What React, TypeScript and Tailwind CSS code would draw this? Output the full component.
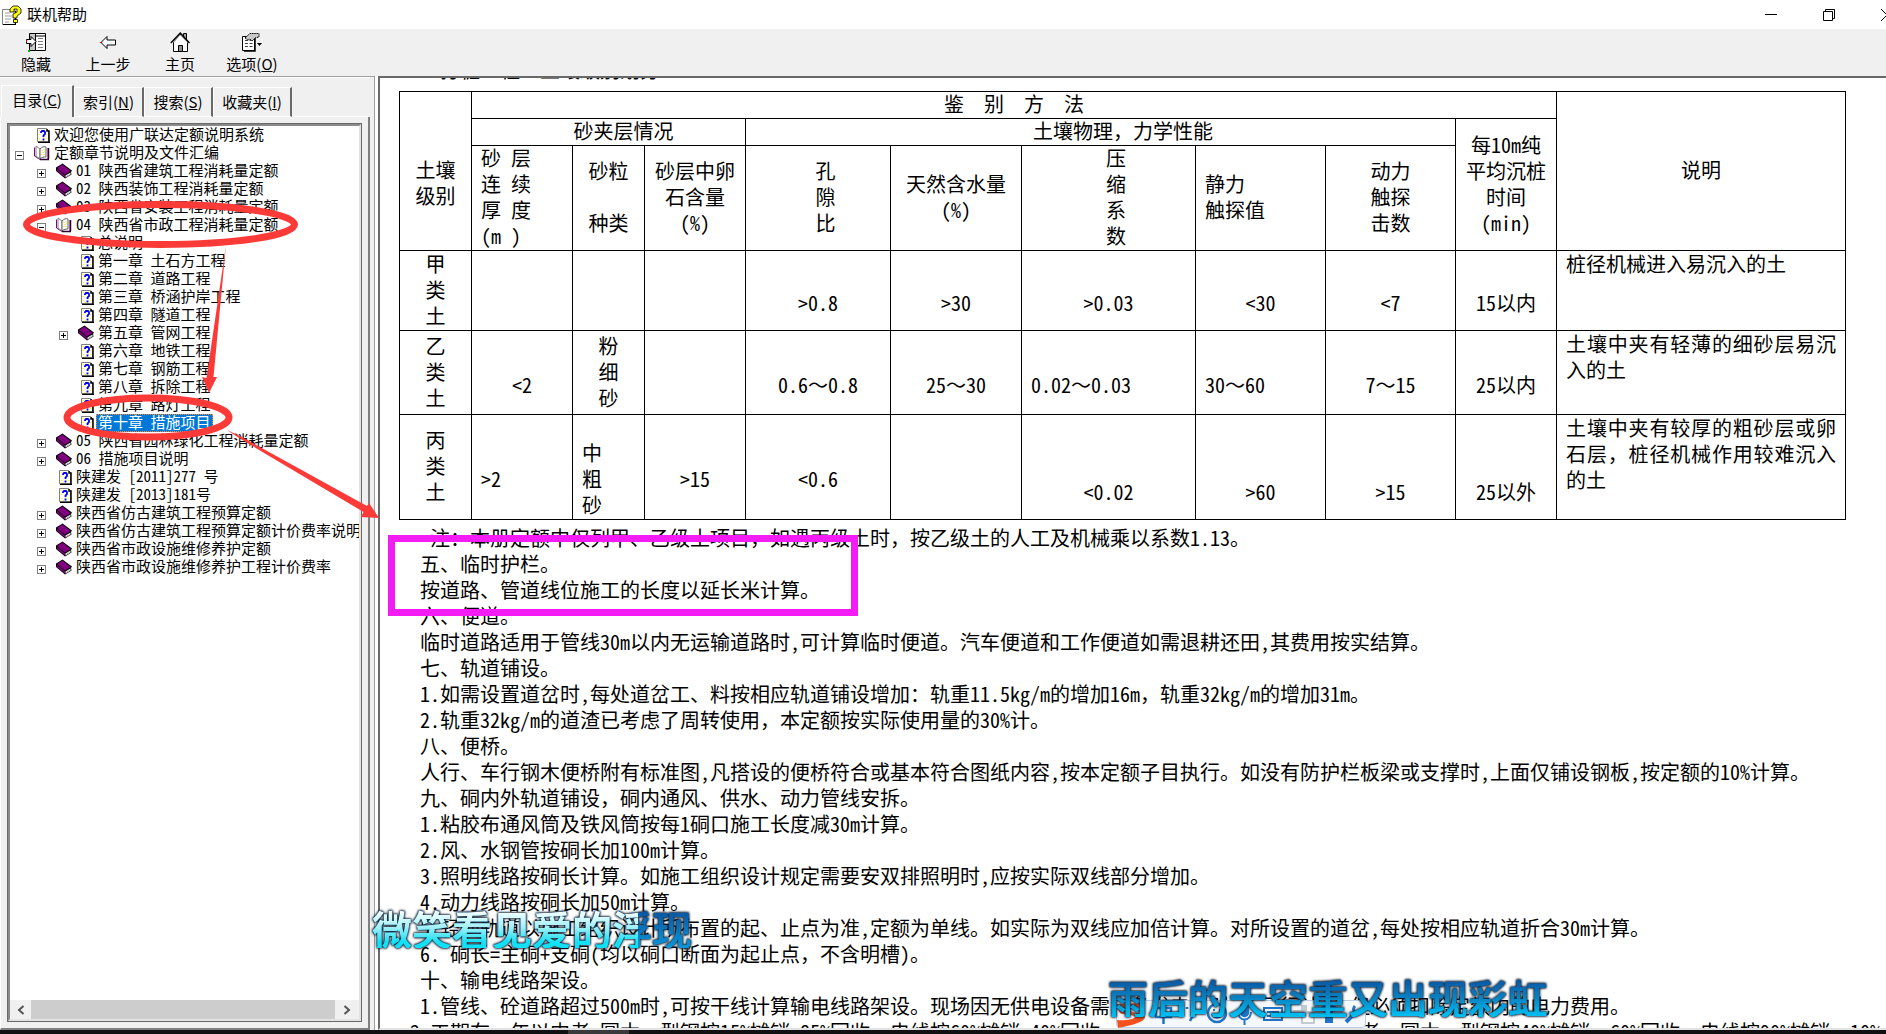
import { useState, type ReactNode } from 'react';
import clsx from 'clsx';

type NodeKind = 'page' | 'book' | 'open';

type TreeItem = {
  level: 0 | 1 | 2;
  kind: NodeKind;
  label: string;
  toggle?: '+' | '-';
};

const TREE: TreeItem[] = [
  { level: 0, kind: 'page', label: '欢迎您使用广联达定额说明系统' },
  { level: 0, kind: 'open', toggle: '-', label: '定额章节说明及文件汇编' },
  { level: 1, kind: 'book', toggle: '+', label: '01 陕西省建筑工程消耗量定额' },
  { level: 1, kind: 'book', toggle: '+', label: '02 陕西装饰工程消耗量定额' },
  { level: 1, kind: 'book', toggle: '+', label: '03 陕西省安装工程消耗量定额' },
  { level: 1, kind: 'open', toggle: '-', label: '04 陕西省市政工程消耗量定额' },
  { level: 2, kind: 'page', label: '总说明' },
  { level: 2, kind: 'page', label: '第一章 土石方工程' },
  { level: 2, kind: 'page', label: '第二章 道路工程' },
  { level: 2, kind: 'page', label: '第三章 桥涵护岸工程' },
  { level: 2, kind: 'page', label: '第四章 隧道工程' },
  { level: 2, kind: 'book', toggle: '+', label: '第五章 管网工程' },
  { level: 2, kind: 'page', label: '第六章 地铁工程' },
  { level: 2, kind: 'page', label: '第七章 钢筋工程' },
  { level: 2, kind: 'page', label: '第八章 拆除工程' },
  { level: 2, kind: 'page', label: '第九章 路灯工程' },
  { level: 2, kind: 'page', label: '第十章 措施项目' },
  { level: 1, kind: 'book', toggle: '+', label: '05 陕西省园林绿化工程消耗量定额' },
  { level: 1, kind: 'book', toggle: '+', label: '06 措施项目说明' },
  { level: 1, kind: 'page', label: '陕建发 [2011]277 号' },
  { level: 1, kind: 'page', label: '陕建发 [2013]181号' },
  { level: 1, kind: 'book', toggle: '+', label: '陕西省仿古建筑工程预算定额' },
  { level: 1, kind: 'book', toggle: '+', label: '陕西省仿古建筑工程预算定额计价费率说明' },
  { level: 1, kind: 'book', toggle: '+', label: '陕西省市政设施维修养护定额' },
  { level: 1, kind: 'book', toggle: '+', label: '陕西省市政设施维修养护工程计价费率' },
];

const INDENT = ['pl-1', 'pl-[26px]', 'pl-12'];

const PARAGRAPHS = [
  '五、临时护栏。',
  '按道路、管道线位施工的长度以延长米计算。',
  '六、便道。',
  '临时道路适用于管线30m以内无运输道路时,可计算临时便道。汽车便道和工作便道如需退耕还田,其费用按实结算。',
  '七、轨道铺设。',
  '1.如需设置道岔时,每处道岔工、料按相应轨道铺设增加：轨重11.5kg/m的增加16m，轨重32kg/m的增加31m。',
  '2.轨重32kg/m的道渣已考虑了周转使用，本定额按实际使用量的30%计。',
  '八、便桥。',
  '人行、车行钢木便桥附有标准图,凡搭设的便桥符合或基本符合图纸内容,按本定额子目执行。如没有防护栏板梁或支撑时,上面仅铺设钢板,按定额的10%计算。',
  '九、硐内外轨道铺设，硐内通风、供水、动力管线安拆。',
  '1.粘胶布通风筒及铁风筒按每1硐口施工长度减30m计算。',
  '2.风、水钢管按硐长加100m计算。',
  '3.照明线路按硐长计算。如施工组织设计规定需要安双排照明时,应按实际双线部分增加。',
  '4.动力线路按硐长加50m计算。',
  '5.轻便轨道以施工组织设计所布置的起、止点为准,定额为单线。如实际为双线应加倍计算。对所设置的道岔,每处按相应轨道折合30m计算。',
  '6. 硐长=主硐+支硐(均以硐口断面为起止点，不含明槽)。',
  '十、输电线路架设。',
  '1.管线、砼道路超过500m时,可按干线计算输电线路架设。现场因无供电设备需自备发电机时,可另行计算,但必须扣除定额内的电力费用。',
];

const COLUMN_WIDTHS = [
  'w-[72px]', 'w-[101px]', 'w-[72px]', 'w-[101px]', 'w-[145px]', 'w-[131px]',
  'w-[174px]', 'w-[130px]', 'w-[130px]', 'w-[101px]', 'w-[289px]',
];

function HelpLogo() {
  return (
    <svg width="20" height="20" viewBox="0 0 20 20">
      <path d="M.5 4.500H13v15H.5z" fill="#fff" stroke="#808080" />
      <path d="M3 8h5M3 11h7M3 14h6M3 17h4" stroke="#9a9a9a" />
      <path d="M13.500 6v13.500M1 19.500h13" stroke="#000" />
      <path d="M8 7V4l3-3h5l3 3v4l-4 3v2h-4V9l4-2V4h-3v3z" fill="#ff0" stroke="#000" strokeWidth=".8" />
      <path d="M11.500 14.500h4v3h-4z" fill="#ff0" stroke="#000" strokeWidth=".8" />
    </svg>
  );
}

function PageIcon() {
  return (
    <svg width="13" height="15" viewBox="0 0 13 15" className="ml-[3px]">
      <path d="M.5.5h9l2 2v11H.5z" fill="#fffff0" stroke="#808080" />
      <path d="M2 2h1v1H2zM8 2h1v1H8zM2 6h1v1H2zM9 6h1v1H9zM2 10h1v1H2zM9 10h1v1H9zM4 12h1v1H4z" fill="#ff0" />
      <path d="M10 1v2h2v11.500M1 14.500h12" fill="none" stroke="#000" strokeWidth="1.500" />
      <path d="M4 5V4l1-1h2l1 1v2L6.500 7.500V9M6.500 10.500v2" fill="none" stroke="#00f" strokeWidth="1.800" />
    </svg>
  );
}

function BookIcon() {
  return (
    <svg width="16" height="16" viewBox="0 0 16 16">
      <path d="M0 4.500L6.500.5 16 7.500l-1 1.500.5 2.500L9 15.500 0 8z" fill="#000" />
      <path d="M1 5l5.500-3.500L14.500 8 9 11.500z" fill="#800080" />
      <path d="M1 6l8 6.500v2L1 8z" fill="#800080" />
      <path d="M9.500 12.500l5-3v2l-5 3z" fill="#fff" />
      <path d="M10 13.500l4-2.500" stroke="#808080" strokeWidth=".6" />
    </svg>
  );
}

function OpenBookIcon() {
  return (
    <svg width="16" height="16" viewBox="0 0 16 16">
      <path d="M.5 2.500v8.500l5.500 3.500h8V3" fill="#fff" stroke="#800080" />
      <path d="M2 1l4 3v10l-4-3z" fill="#fff" stroke="#808080" />
      <path d="M6 4c2-2 4-3 6-2v10c-2 0-4 0-6 2z" fill="#fff" stroke="#606060" />
      <path d="M8 5v1M10 4v1M9 7v1M11 6v1M8 9v1M10 9v1" stroke="#e0d000" />
      <path d="M14.500 3v11M6 14.500h9" stroke="#300030" strokeWidth="1.500" />
    </svg>
  );
}

const NODE_ICONS: Record<NodeKind, () => ReactNode> = {
  page: PageIcon,
  book: BookIcon,
  open: OpenBookIcon,
};

function HideIcon() {
  return (
    <svg width="20" height="19" viewBox="0 0 20 19">
      <path d="M3.500.5h16v17h-16z" fill="#fff" stroke="#000" />
      <path d="M4 3h15" stroke="#000" />
      <path d="M4 1h5v16H4z" fill="#c8c8c8" />
      <path d="M9.500 1v17" stroke="#000" />
      <path d="M12 5.500h5M12 8.500h5M12 11.500h5M12 14.500h5" stroke="#808080" />
      <path d="M.5 6.500H5v-3l5 5-5 5v-3H.5z" fill="#fff" stroke="#000" />
      <path d="M0 7h1v2H0z" fill="red" />
      <path d="M2 17h2v2H2z" fill="#00c000" />
    </svg>
  );
}

function BackIcon() {
  return (
    <svg width="16" height="19" viewBox="0 0 16 19">
      <path d="M1 9.500l6-6v3.500h8.500v5H7v3.500z" fill="#fff" stroke="#000" />
      <path d="M0 9h2v1H0z" fill="red" />
    </svg>
  );
}

function HomeIcon() {
  return (
    <svg width="20" height="20" viewBox="0 0 20 20">
      <path d="M13.500 6V1.500h3V8" fill="#a0a0a0" stroke="#000" />
      <path d="M3.500 10v9.500h14V10l-7-8z" fill="#fff" stroke="#000" />
      <path d="M.8 11l9.500-10 9.200 10" fill="none" stroke="#000" strokeWidth="1.400" />
      <path d="M3 10.500l7.300-7.500 7.200 7.500" fill="none" stroke="#b0b0b0" />
      <path d="M8.500 13.500h4v6h-4z" fill="#909090" stroke="#000" />
    </svg>
  );
}

function OptionsIcon() {
  return (
    <svg width="20" height="19" viewBox="0 0 20 19">
      <path d="M.5 3.500h12v14H.5z" fill="#fff" stroke="#000" />
      <path d="M3 7.500h3M3 10.500h3M3 13.500h3M7.500 7.500h3M7.500 10.500h3M7.500 13.500h3" stroke="#404040" />
      <path d="M13 5v13H2" fill="none" stroke="#000" strokeWidth="1.500" />
      <path d="M3 5l5-4.500h9V4l-4 1-3 3-2-2-2 1z" fill="#c8c8c8" stroke="#000" strokeDasharray="1.500 .7" />
      <path d="M15 10h5l-2.500 3z" fill="#000" />
    </svg>
  );
}

function ToolButton({ icon, children }: { icon: ReactNode; children: ReactNode }) {
  return (
    <button className="flex w-18 flex-col items-center gap-0.5 pt-[3px] text-[15px] leading-5">
      <span className="flex h-5 items-center">{icon}</span>
      <span className="whitespace-nowrap">{children}</span>
    </button>
  );
}

const TABS = [
  { label: '目录', hotkey: 'C', width: 'w-[73px]' },
  { label: '索引', hotkey: 'N', width: 'w-[70px]' },
  { label: '搜索', hotkey: 'S', width: 'w-[69px]' },
  { label: '收藏夹', hotkey: 'I', width: 'w-[79px]' },
];

function TreeRow({ item, selected, onSelect }: { item: TreeItem; selected: boolean; onSelect: () => void }) {
  const Icon = NODE_ICONS[item.kind];
  return (
    <li className={clsx('flex h-[18px] items-center whitespace-nowrap', INDENT[item.level])}>
      {item.toggle ? (
        <button
          aria-label={item.label}
          className="mt-1 flex size-[9px] shrink-0 items-center justify-center border border-[#808080] bg-white"
        >
          <svg width="5" height="5" viewBox="0 0 5 5">
            <path d={item.toggle === '+' ? 'M0 2.500h5M2.500 0v5' : 'M0 2.500h5'} stroke="#000" />
          </svg>
        </button>
      ) : (
        <span className="w-[9px] shrink-0" />
      )}
      <span className="ml-2.5 w-4 shrink-0">
        <Icon />
      </span>
      <a
        href="#doc"
        onClick={onSelect}
        className={clsx(
          'ml-0.5 px-0.5 pb-0.5 leading-4',
          selected && 'bg-[#0078d7] text-white outline-1 -outline-offset-1 outline-dotted outline-[#ff8728]',
        )}
      >
        {item.label}
      </a>
    </li>
  );
}

type CellProps = {
  lines: string[];
  align?: 'left' | 'center' | 'note';
  indent?: string;
  colSpan?: number;
  rowSpan?: number;
  head?: boolean;
};

// An empty string in `lines` is a blank line of the source document.
function Cell({ lines, align = 'center', indent, colSpan, rowSpan, head }: CellProps) {
  const Tag = head ? 'th' : 'td';
  return (
    <Tag
      colSpan={colSpan}
      rowSpan={rowSpan}
      className={clsx(
        'border border-black px-[9px] py-0 font-light',
        align === 'left' && 'text-left align-middle',
        align === 'center' && 'text-center align-middle',
        align === 'note' && 'text-justify align-top',
        indent,
      )}
    >
      {lines.map((line, i) => (
        <div key={i} className={align === 'note' ? 'leading-[26px]' : 'h-[26px] leading-6'}>{line}</div>
      ))}
    </Tag>
  );
}

function SoilTable() {
  return (
    <table className="ml-[19px] w-[1447px] table-fixed border-collapse">
      <colgroup>
        {COLUMN_WIDTHS.map((w, i) => (
          <col key={i} className={w} />
        ))}
      </colgroup>
      <thead>
        <tr className="h-[27px]">
          <Cell head rowSpan={3} lines={['', '土壤', '级别']} />
          <Cell head colSpan={9} lines={['鉴　别　方　法']} />
          <Cell head rowSpan={3} lines={['说明']} />
        </tr>
        <tr className="h-[27px]">
          <Cell head colSpan={3} indent="indent-[30px]" lines={['砂夹层情况']} />
          <Cell head colSpan={5} indent="indent-[45px]" lines={['土壤物理，力学性能']} />
          <Cell head rowSpan={2} lines={['每10m纯', '平均沉桩', '时间', '(min)']} />
        </tr>
        <tr className="h-[105px]">
          <Cell head align="left" lines={['砂 层', '连 续', '厚 度', '(m )']} />
          <Cell head lines={['砂粒', '', '种类']} />
          <Cell head lines={['砂层中卵', '石含量', '(%)']} />
          <Cell head indent="indent-[15px]" lines={['孔', '隙', '比']} />
          <Cell head lines={['天然含水量', '(%)']} />
          <Cell head indent="indent-[15px]" lines={['压', '缩', '系', '数']} />
          <Cell head align="left" lines={['静力', '触探值']} />
          <Cell head lines={['动力', '触探', '击数']} />
        </tr>
      </thead>
      <tbody>
        <tr className="h-20">
          <Cell lines={['甲', '类', '土']} />
          <Cell lines={[]} />
          <Cell lines={[]} />
          <Cell lines={[]} />
          <Cell lines={['', '>0.8']} />
          <Cell lines={['', '>30']} />
          <Cell lines={['', '>0.03']} />
          <Cell lines={['', '<30']} />
          <Cell lines={['', '<7']} />
          <Cell lines={['', '15以内']} />
          <Cell align="note" lines={['桩径机械进入易沉入的土']} />
        </tr>
        <tr className="h-[84px]">
          <Cell lines={['乙', '类', '土']} />
          <Cell lines={['', '<2']} />
          <Cell lines={['粉', '细', '砂']} />
          <Cell lines={[]} />
          <Cell lines={['', '0.6～0.8']} />
          <Cell lines={['', '25～30']} />
          <Cell align="left" lines={['', '0.02～0.03']} />
          <Cell align="left" lines={['', '30～60']} />
          <Cell lines={['', '7～15']} />
          <Cell lines={['', '25以内']} />
          <Cell align="note" lines={['土壤中夹有轻薄的细砂层易沉入的土']} />
        </tr>
        <tr className="h-[105px]">
          <Cell lines={['丙', '类', '土']} />
          <Cell align="left" lines={['', '>2']} />
          <Cell align="left" lines={['', '中', '粗', '砂']} />
          <Cell lines={['', '>15']} />
          <Cell lines={['', '<0.6']} />
          <Cell lines={[]} />
          <Cell lines={['', '', '<0.02']} />
          <Cell lines={['', '', '>60']} />
          <Cell lines={['', '', '>15']} />
          <Cell lines={['', '', '25以外']} />
          <Cell align="note" lines={['土壤中夹有较厚的粗砂层或卵石层，桩径机械作用较难沉入的土']} />
        </tr>
      </tbody>
    </table>
  );
}

function Annotations() {
  return (
    <>
      <svg width="400" height="540" viewBox="0 0 400 540" className="pointer-events-none absolute top-0 left-0">
        <g fill="none" stroke="#fc3b39" strokeWidth="7">
          <ellipse cx="160.500" cy="224.500" rx="134" ry="20" />
          <ellipse cx="148" cy="417.500" rx="81" ry="19.500" />
        </g>
        <g fill="#fc3b39">
          <path d="M226 245L213.500 377l3.500 0L209 393l-7-16 4.500 1z" />
          <path d="M227 430L240 436 367 506l2-3 10 15-18-1 2.500-5L239 438z" />
        </g>
      </svg>
      <div className="pointer-events-none absolute top-[535px] left-[388px] h-[81px] w-[470px] border-7 border-[#f41cf4]" />
    </>
  );
}

function ImeBar() {
  return (
    <div className="absolute top-[1000px] left-[1116px] flex h-7 w-[250px] items-center rounded-sm border border-[#b9cfe6] bg-[#f5f9fe]">
      <svg width="248" height="28" viewBox="0 0 248 28" fill="none" stroke="#1f74c8" strokeWidth="2.500">
        <path d="M0 4l28-1c-1 5-14 4-14 7 0 4 14 2 14 7 0 6-18 9-27 11l-1-8c8 1 18-1 18-3 0-3-16-1-16-6z" fill="#f4511e" stroke="none" />
        <path d="M39 8h15v9H39zM46.500 3v21M70 7v2M76 15l-3 6" />
        <circle cx="100" cy="13" r="9" />
        <path d="M95 14c2 5 8 5 10 0M97 9v2M103 9v2" strokeWidth="2" />
        <rect x="124" y="3" width="7" height="13" rx="3.500" fill="#1f74c8" />
        <path d="M121 12c0 10 13 10 13 0M127.500 20v5" strokeWidth="2" />
        <path d="M147 8h18v12h-18zM150 12h12M150 16h12" strokeWidth="2" />
        <path d="M176 10h8V5h6v6h6v6h-20z" fill="#c3c9d3" stroke="none" />
        <path d="M185 13h12v10h-12z" fill="#fff" stroke="#b4bcc8" strokeWidth="1.500" />
        <path d="M204 7l5-3h6l5 3-2 5-2-1v12h-8V11l-2 1z" fill="#1f74c8" stroke="none" />
        <path d="M229 22l10-10" strokeWidth="4" />
        <path d="M238 6c-4 4 1 10 6 6" strokeWidth="3" />
      </svg>
    </div>
  );
}

function Lyrics() {
  return (
    <div className="pointer-events-none text-[40px] leading-10 font-bold whitespace-nowrap">
      <p className="absolute top-[908px] left-[372px] bg-[linear-gradient(#f4ffff_10%,#9deff6_50%,#12e0f4_85%),linear-gradient(#0a4f9c,#0a96d8)] bg-[length:266px_100%,100%_100%] bg-clip-text bg-no-repeat text-transparent [filter:drop-shadow(0_0_1px_#123)_drop-shadow(0_0_1px_#123)]">
        微笑看见爱的浮现
      </p>
      <p className="absolute top-[977px] left-[1108px] bg-[linear-gradient(#0a58a4_10%,#0a80c0_50%,#00bcf0_95%)] bg-clip-text text-transparent [filter:drop-shadow(0_0_1px_#123)_drop-shadow(0_0_1px_#123)]">
        雨后的天空重又出现彩虹
      </p>
    </div>
  );
}

export default function App() {
  const [selected, setSelected] = useState(16);
  const [tab, setTab] = useState(0);

  return (
    <div className="relative flex h-screen flex-col overflow-hidden bg-[#f0f0f0] font-['Noto_Sans_CJK_SC',sans-serif] text-black">
      <header className="flex h-[29px] shrink-0 items-center bg-white pl-0.5">
        <HelpLogo />
        <h1 className="ml-[5px] pb-0.5 text-[15px] leading-5">联机帮助</h1>
        <div className="-mr-[30px] ml-auto flex">
          <button aria-label="最小化" className="flex h-7 w-[58px] items-center justify-center">
            <svg width="12" height="12" viewBox="0 0 12 12"><path d="M0 5.500h12" stroke="#000" /></svg>
          </button>
          <button aria-label="还原" className="flex h-7 w-[58px] items-center justify-center">
            <svg width="12" height="12" viewBox="0 0 12 12" fill="none" stroke="#000">
              <path d="M.5 2.500h9v9h-9zM2.500 2.500v-2h9v9h-2" />
            </svg>
          </button>
          <button aria-label="关闭" className="flex h-7 w-[58px] items-center justify-center">
            <svg width="12" height="12" viewBox="0 0 12 12"><path d="M0 0l12 12M12 0L0 12" stroke="#000" /></svg>
          </button>
        </div>
      </header>

      <nav className="flex h-[47px] shrink-0">
        <ToolButton icon={<HideIcon />}>隐藏</ToolButton>
        <ToolButton icon={<BackIcon />}>上一步</ToolButton>
        <ToolButton icon={<HomeIcon />}>主页</ToolButton>
        <ToolButton icon={<OptionsIcon />}>选项(<u>O</u>)</ToolButton>
      </nav>

      <div className="flex min-h-0 flex-1">
        <aside className="flex w-[374px] shrink-0 flex-col border-t border-[#a0a0a0] pr-1">
          <div role="tablist" className="flex h-10 shrink-0 items-end border-t border-white pl-px text-[15px]">
            {TABS.map((t, i) => (
              <button
                key={t.hotkey}
                role="tab"
                aria-selected={tab === i}
                onClick={() => setTab(i)}
                className={clsx(
                  'border-t border-l border-r-2 border-t-white border-r-[#696969] border-l-white whitespace-nowrap',
                  t.width,
                  tab === i ? 'h-8 pb-0.5' : 'h-[30px] border-b border-b-white',
                )}
              >
                {t.label}(<u>{t.hotkey}</u>)
              </button>
            ))}
            <span className="flex-1 border-b border-white" />
          </div>
          <div className="flex min-h-0 flex-1 flex-col border-r-2 border-b-2 border-l border-r-[#808080] border-b-[#808080] border-l-white p-1.5">
            <div className="flex min-h-0 flex-1 flex-col border border-[#696969]">
              <div className="flex min-h-0 flex-1 flex-col border-2 border-t-[#8a8a8a] border-r-[#e3e3e3] border-b-[#e3e3e3] border-l-[#8a8a8a] bg-white">
                <ul className="min-h-0 flex-1 overflow-hidden pl-px font-['Noto_Sans_Mono_CJK_SC','Noto_Sans_CJK_SC',monospace] text-[15px]">
                  {TREE.map((item, i) => (
                    <TreeRow key={item.label} item={item} selected={i === selected} onSelect={() => setSelected(i)} />
                  ))}
                </ul>
                <div className="flex h-[19px] shrink-0 items-center bg-[#f0f0f0]">
                  <button aria-label="向左" className="flex h-full w-[21px] items-center justify-center">
                    <svg width="8" height="10" viewBox="0 0 8 10"><path d="M6.500 1L2 5l4.500 4" fill="none" stroke="#555" strokeWidth="2" /></svg>
                  </button>
                  <span className="h-full flex-1 bg-[#cdcdcd]" />
                  <button aria-label="向右" className="flex h-full w-6 items-center justify-center">
                    <svg width="8" height="10" viewBox="0 0 8 10"><path d="M1.500 1L6 5 1.500 9" fill="none" stroke="#555" strokeWidth="2" /></svg>
                  </button>
                </div>
              </div>
            </div>
          </div>
        </aside>

        <div className="flex min-w-0 flex-1 border-l border-[#a0a0a0]">
          <div className="w-[3px] shrink-0 bg-white" />
          <main
            id="doc"
            className="min-w-0 flex-1 overflow-hidden border-2 border-t-[#696969] border-r-0 border-b-[#e3e3e3] border-l-[#696969] bg-white font-['Noto_Sans_Mono_CJK_SC','Noto_Sans_CJK_SC',monospace] text-[20px] leading-[26px] font-light whitespace-nowrap"
          >
            <p className="-mt-[21px] mb-2 pl-[60px]">打桩工程　土壤级别划分</p>
            <div className="whitespace-normal">
              <SoilTable />
            </div>
            <p className="mt-[5px] pl-[50px]">注：本册定额中仅列甲、乙级土项目，如遇丙级土时，按乙级土的人工及机械乘以系数1.13。</p>
            {PARAGRAPHS.map((text) => (
              <p key={text} className="pl-10">{text}</p>
            ))}
            <p className="pl-[30px]">
              2.工期在一年以内者,圆木、型钢按15%摊销,85%回收，电线按60%摊销,40%回收。工期在一年以上至二年以内者，圆木、型钢按40%摊销，60%回收，电线按90%摊销，10%
            </p>
          </main>
        </div>
      </div>

      <footer className="flex h-1 shrink-0 bg-[#111113]">
        <span className="ml-[568px] w-[61px] bg-[#3a3a3d]" />
      </footer>

      <Annotations />
      <ImeBar />
      <Lyrics />
    </div>
  );
}
